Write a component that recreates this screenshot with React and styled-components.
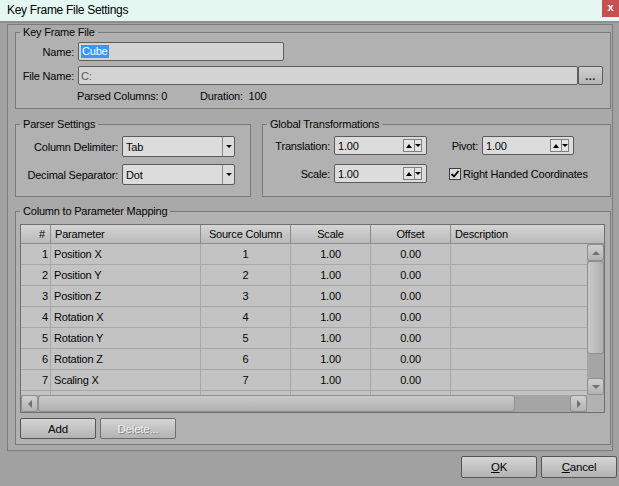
import React from "react";
import styled, { createGlobalStyle } from "styled-components";

const Global = createGlobalStyle`
  html, body { margin: 0; padding: 0; background: #a1a1a1; }
  body {
    font-family: "Liberation Sans", Arial, sans-serif;
    font-size: 11px;
    letter-spacing: -0.2px;
    color: #050505;
  }
  * { box-sizing: border-box; }
`;

const Window = styled.div`
  width: 619px;
  height: 486px;
  display: flex;
  flex-direction: column;
  background: #a1a1a1;
  overflow: hidden;
`;

const TitleBar = styled.div`
  height: 23px;
  flex: none;
  display: flex;
  align-items: flex-start;
  background: #e4f7f1;
  border-bottom: 2px solid #8e8e8e;
  font-size: 12px;
  letter-spacing: -0.3px;
  color: #000;
`;

const TitleText = styled.div`
  flex: 1;
  padding: 3px 0 0 7px;
  line-height: 14px;
`;

const CloseBtn = styled.div`
  width: 17px;
  height: 17px;
  background: #c75050;
  color: #fff;
  font-weight: bold;
  font-size: 11px;
  line-height: 15px;
  text-align: center;
`;

const Body = styled.div`
  flex: 1;
  display: flex;
  flex-direction: column;
  padding: 1px 2px 0 7px;
`;

const Panel = styled.div`
  width: 606px;
  height: 427px;
  flex: none;
  border: 1px solid #7b7b7b;
  background: #a9a9a9;
  padding: 0 1px 0 7px;
  display: flex;
  flex-direction: column;
`;

const Group = styled.fieldset`
  margin: 0;
  padding: 0;
  min-width: 0;
  border: 1px solid #7a7a7a;
  background: #b1b1b1;
  width: ${(p) => p.$w}px;
  height: ${(p) => p.$h}px;
  flex: none;
  margin-bottom: ${(p) => p.$mb || 0}px;
`;

const Legend = styled.legend`
  padding: 0 3px;
  margin-left: 4px;
  line-height: 14px;
  font-size: 11px;
  color: #050505;
`;

const GroupRow = styled.div`
  display: flex;
  gap: 11px;
  margin-bottom: 7px;
`;

const FileGrid = styled.div`
  display: grid;
  grid-template-columns: 58px 1fr;
  column-gap: 4px;
  row-gap: 5px;
  padding: 3px 7px 0 0;
  align-items: center;
`;

const Label = styled.label`
  text-align: right;
  white-space: nowrap;
`;

const FieldRow = styled.div`
  display: flex;
`;

const Field = styled.div`
  height: 19px;
  width: ${(p) => (p.$w ? `${p.$w}px` : "auto")};
  flex: ${(p) => (p.$w ? "none" : "1")};
  background: #d3d3d3;
  border: 1px solid #5e5e5e;
  border-radius: 2px;
  display: flex;
  align-items: center;
  padding-left: 2px;
  color: ${(p) => (p.$muted ? "#5a5a5a" : "#050505")};
`;

const Selected = styled.span`
  background: #3399ff;
  color: #fff;
  padding: 0 1px;
  line-height: 13px;
`;

const BrowseBtn = styled.div`
  width: 25px;
  height: 19px;
  flex: none;
  border: 1px solid #5e5e5e;
  border-radius: 2px;
  background: linear-gradient(#d0d0d0, #b4b4b4);
  display: flex;
  align-items: flex-end;
  justify-content: center;
  font-size: 11px;
  font-weight: bold;
  line-height: 12px;
  letter-spacing: 0.5px;
  padding-bottom: 2px;
  color: #222;
`;

const InfoRow = styled.div`
  grid-column: 2;
  margin-left: -1px;
  display: flex;
  line-height: 13px;
`;

const InfoItem = styled.span`
  width: ${(p) => p.$w}px;
  flex: none;
  white-space: nowrap;
`;

const FormGrid = styled.div`
  display: grid;
  grid-template-columns: ${(p) => p.$cols};
  column-gap: 4px;
  row-gap: ${(p) => p.$rg}px;
  grid-auto-rows: ${(p) => p.$rh}px;
  padding-top: 5px;
  align-items: center;
`;

const Combo = styled.div`
  height: 21px;
  background: #dcdcdc;
  border: 1px solid #5a5a5a;
  border-radius: 2px;
  display: flex;
  align-items: stretch;
`;

const ComboText = styled.span`
  flex: 1;
  padding-left: 3px;
  display: flex;
  align-items: center;
`;

const ComboArrow = styled.span`
  width: 12px;
  border-left: 1px solid #8a8a8a;
  display: flex;
  align-items: center;
  justify-content: center;
`;

const Tri = styled.span`
  width: 0;
  height: 0;
  border-left: ${(p) => p.$s || 3}px solid transparent;
  border-right: ${(p) => p.$s || 3}px solid transparent;
  ${(p) =>
    p.$up
      ? `border-bottom: ${p.$h || 3}px solid ${p.$c || "#000"};`
      : `border-top: ${p.$h || 3}px solid ${p.$c || "#000"};`}
`;

const TriSide = styled.span`
  width: 0;
  height: 0;
  border-top: 4px solid transparent;
  border-bottom: 4px solid transparent;
  ${(p) =>
    p.$left
      ? `border-right: 4px solid ${p.$c || "#000"};`
      : `border-left: 4px solid ${p.$c || "#000"};`}
`;

const Spinner = styled.div`
  height: 19px;
  background: #dcdcdc;
  border: 1px solid #5a5a5a;
  border-radius: 2px;
  display: flex;
  align-items: center;
  padding: 0 4px 0 3px;
`;

const SpinText = styled.span`
  flex: 1;
`;

const SpinBox = styled.span`
  width: 19px;
  height: 13px;
  border: 1px solid #7f7f7f;
  background: #e4e4e4;
  display: flex;
`;

const SpinHalf = styled.span`
  width: ${(p) => p.$w}px;
  display: flex;
  align-items: center;
  justify-content: center;
  & + & {
    border-left: 1px solid #7f7f7f;
  }
`;

const CheckRow = styled.div`
  grid-column: 3 / span 2;
  margin-left: 18px;
  display: flex;
  align-items: center;
  gap: 2px;
  white-space: nowrap;
`;

const CheckBox = styled.span`
  width: 12px;
  height: 12px;
  border: 1px solid #3c3c3c;
  background: #dcdcdc;
  display: flex;
  align-items: center;
  justify-content: center;
`;

const MappingBody = styled.div`
  padding: 6px 0 0 4px;
  display: flex;
  flex-direction: column;
`;

const Table = styled.div`
  width: 585px;
  height: 189px;
  border: 1px solid #6f6f6f;
  background: #c3c3c3;
  display: flex;
  flex-direction: column;
`;

const COLS = "30px 150px 90px 80px 80px 136px";

const HeaderRow = styled.div`
  height: 19px;
  flex: none;
  display: grid;
  grid-template-columns: 30px 150px 90px 80px 80px 1fr;
  background: linear-gradient(#d5d5d5, #bababa);
  border-bottom: 1px solid #8d8d8d;
`;

const HeadCell = styled.div`
  display: flex;
  align-items: center;
  justify-content: ${(p) => p.$align || "center"};
  padding: 0 ${(p) => (p.$align === "flex-end" ? 5 : 4)}px;
  border-right: ${(p) => (p.$last ? "none" : "1px solid #8c8c8c")};
  white-space: nowrap;
`;

const Main = styled.div`
  height: 151px;
  flex: none;
  display: flex;
`;

const Rows = styled.div`
  flex: 1;
  overflow: hidden;
`;

const Row = styled.div`
  height: 21px;
  display: grid;
  grid-template-columns: ${COLS};
  border-bottom: 1px solid #a8a8a8;
`;

const Cell = styled.div`
  display: flex;
  align-items: center;
  justify-content: ${(p) => p.$align || "center"};
  padding: 0 ${(p) => (p.$align === "flex-end" ? 2 : 3)}px;
  border-right: ${(p) => (p.$last ? "none" : "1px solid #a8a8a8")};
  white-space: nowrap;
`;

const VScroll = styled.div`
  width: 17px;
  flex: none;
  display: flex;
  flex-direction: column;
  background: #a5a5a5;
`;

const ScrollBtn = styled.div`
  width: 17px;
  height: 17px;
  flex: none;
  border: 1px solid #8f8f8f;
  border-radius: 3px;
  background: linear-gradient(#d0d0d0, #b3b3b3);
  display: flex;
  align-items: center;
  justify-content: center;
`;

const Thumb = styled.div`
  ${(p) => (p.$horizontal ? `width: ${p.$len}px; height: 17px;` : `height: ${p.$len}px; width: 17px;`)}
  flex: none;
  border: 1px solid #8f8f8f;
  border-radius: 3px;
  background: ${(p) =>
    p.$horizontal
      ? "linear-gradient(#c9c9c9, #b0b0b0)"
      : "linear-gradient(90deg, #c9c9c9, #b0b0b0)"};
`;

const Track = styled.div`
  flex: 1;
  background: #a5a5a5;
`;

const HScrollRow = styled.div`
  height: 17px;
  flex: none;
  display: flex;
`;

const HScroll = styled.div`
  width: 566px;
  display: flex;
  background: #a5a5a5;
`;

const Corner = styled.div`
  flex: 1;
  background: #b1b1b1;
`;

const ButtonRow = styled.div`
  display: flex;
  gap: 4px;
  margin-top: 5px;
`;

const Button = styled.div`
  width: 76px;
  height: ${(p) => p.$h || 21}px;
  border: 1px solid ${(p) => (p.$disabled ? "#6f6f6f" : "#555")};
  border-radius: 2px;
  background: linear-gradient(#d4d4d4, #b3b3b3);
  display: flex;
  align-items: center;
  justify-content: center;
  font-size: 11.5px;
  color: ${(p) => (p.$disabled ? "#efefef" : "#050505")};
  text-shadow: ${(p) => (p.$disabled ? "1px 1px 0 #858585" : "none")};
`;

const Footer = styled.div`
  display: flex;
  justify-content: flex-end;
  gap: 4px;
  padding-top: 5px;
`;

const Mn = styled.span`
  text-decoration: underline;
`;

const rows = [
  [1, "Position X", 1],
  [2, "Position Y", 2],
  [3, "Position Z", 3],
  [4, "Rotation X", 4],
  [5, "Rotation Y", 5],
  [6, "Rotation Z", 6],
  [7, "Scaling X", 7],
];

function SpinField({ value }) {
  return (
    <Spinner>
      <SpinText>{value}</SpinText>
      <SpinBox>
        <SpinHalf $w={10}>
          <Tri $up $s={3} $h={4} />
        </SpinHalf>
        <SpinHalf $w={7}>
          <Tri $s={3} $h={3} />
        </SpinHalf>
      </SpinBox>
    </Spinner>
  );
}

function ComboField({ value }) {
  return (
    <Combo>
      <ComboText>{value}</ComboText>
      <ComboArrow>
        <Tri $s={3} $h={3} />
      </ComboArrow>
    </Combo>
  );
}

export default function App() {
  return (
    <>
      <Global />
      <Window>
        <TitleBar>
          <TitleText>Key Frame File Settings</TitleText>
          <CloseBtn>x</CloseBtn>
        </TitleBar>
        <Body>
          <Panel>
            <Group $w={596} $h={84} $mb={8}>
              <Legend>Key Frame File</Legend>
              <FileGrid>
                <Label>Name:</Label>
                <FieldRow>
                  <Field $w={206}>
                    <Selected>Cube</Selected>
                  </Field>
                </FieldRow>
                <Label>File Name:</Label>
                <FieldRow>
                  <Field $muted>C:</Field>
                  <BrowseBtn>...</BrowseBtn>
                </FieldRow>
                <InfoRow>
                  <InfoItem $w={123}>Parsed Columns: 0</InfoItem>
                  <InfoItem $w={100}>Duration:&nbsp; 100</InfoItem>
                </InfoRow>
              </FileGrid>
            </Group>

            <GroupRow>
              <Group $w={236} $h={80}>
                <Legend>Parser Settings</Legend>
                <FormGrid $cols="102px 113px" $rg={7} $rh={21}>
                  <Label>Column Delimiter:</Label>
                  <ComboField value="Tab" />
                  <Label>Decimal Separator:</Label>
                  <ComboField value="Dot" />
                </FormGrid>
              </Group>
              <Group $w={349} $h={80}>
                <Legend>Global Transformations</Legend>
                <FormGrid $cols="67px 93px 47px 92px" $rg={9} $rh={19}>
                  <Label>Translation:</Label>
                  <SpinField value="1.00" />
                  <Label>Pivot:</Label>
                  <SpinField value="1.00" />
                  <Label>Scale:</Label>
                  <SpinField value="1.00" />
                  <CheckRow>
                    <CheckBox>
                      <svg width="10" height="10" viewBox="0 0 10 10">
                        <path d="M1.5 5 L4 7.5 L8.5 2" fill="none" stroke="#000" strokeWidth="1.8" />
                      </svg>
                    </CheckBox>
                    <span>Right Handed Coordinates</span>
                  </CheckRow>
                </FormGrid>
              </Group>
            </GroupRow>

            <Group $w={596} $h={241}>
              <Legend>Column to Parameter Mapping</Legend>
              <MappingBody>
                <Table>
                  <HeaderRow>
                    <HeadCell $align="flex-end">#</HeadCell>
                    <HeadCell $align="flex-start">Parameter</HeadCell>
                    <HeadCell>Source Column</HeadCell>
                    <HeadCell>Scale</HeadCell>
                    <HeadCell>Offset</HeadCell>
                    <HeadCell $align="flex-start" $last>
                      Description
                    </HeadCell>
                  </HeaderRow>
                  <Main>
                    <Rows>
                      {rows.map(([n, name, src]) => (
                        <Row key={n}>
                          <Cell $align="flex-end">{n}</Cell>
                          <Cell $align="flex-start">{name}</Cell>
                          <Cell>{src}</Cell>
                          <Cell>1.00</Cell>
                          <Cell>0.00</Cell>
                          <Cell $last />
                        </Row>
                      ))}
                      <Row>
                        <Cell />
                        <Cell />
                        <Cell />
                        <Cell />
                        <Cell />
                        <Cell $last />
                      </Row>
                    </Rows>
                    <VScroll>
                      <ScrollBtn>
                        <Tri $up $s={4} $h={4} $c="#707070" />
                      </ScrollBtn>
                      <Thumb $len={93} />
                      <Track />
                      <ScrollBtn>
                        <Tri $s={4} $h={4} $c="#707070" />
                      </ScrollBtn>
                    </VScroll>
                  </Main>
                  <HScrollRow>
                    <HScroll>
                      <ScrollBtn>
                        <TriSide $left $c="#707070" />
                      </ScrollBtn>
                      <Thumb $horizontal $len={477} />
                      <Track />
                      <ScrollBtn>
                        <TriSide $c="#707070" />
                      </ScrollBtn>
                    </HScroll>
                    <Corner />
                  </HScrollRow>
                </Table>
                <ButtonRow>
                  <Button>Add</Button>
                  <Button $disabled>Delete...</Button>
                </ButtonRow>
              </MappingBody>
            </Group>
          </Panel>
          <Footer>
            <Button $h={22}>
              <Mn>O</Mn>K
            </Button>
            <Button $h={22}>
              <Mn>C</Mn>ancel
            </Button>
          </Footer>
        </Body>
      </Window>
    </>
  );
}
